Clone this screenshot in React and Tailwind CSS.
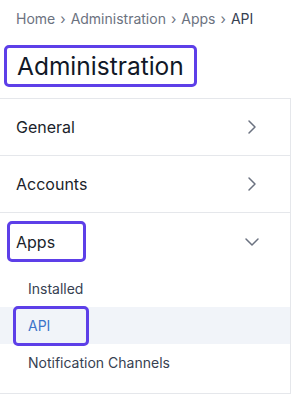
import React from 'react';
import { ChevronRight, ChevronDown } from 'lucide-react';

const crumbs = ['Home', 'Administration', 'Apps'];

const Row = ({ label }) => (
    <div className="h-[57px] border-b border-[#e5e7eb] flex items-center justify-between pl-4 pr-[26px]">
        <span className="text-[16px] text-[#1b1f2b]">{label}</span>
        <ChevronRight size={24} strokeWidth={1.5} className="text-[#6b7280]" />
    </div>
);

export default function App() {
    return (
        <div className="w-[293px] h-[397px] bg-white overflow-hidden flex flex-col" style={{ fontFamily: 'Inter, "Noto Sans", sans-serif' }}>
            {/* Breadcrumb */}
            <div className="h-[29px] pt-[9px] px-4 text-[14px] leading-5 text-[#6b7280] flex items-start gap-[5px]">
                {crumbs.map((c) => (
                    <React.Fragment key={c}>
                        <span>{c}</span>
                        <span>›</span>
                    </React.Fragment>
                ))}
                <span className="text-[#374151]">API</span>
            </div>

            {/* Title */}
            <div className="flex pt-4 pl-1 pb-[11px]">
                <h1 className="h-[42px] flex items-center border-[3px] border-[#5d3fe8] rounded-[5px] px-[10px] text-[24.5px] leading-8 text-[#111827]">
                    Administration
                </h1>
            </div>

            {/* Menu */}
            <div className="w-[291px] border-t border-r border-[#e5e7eb]">
                <Row label="General" />
                <Row label="Accounts" />
                <div className="border-b border-[#e5e7eb] pb-3">
                    <div className="h-[57px] flex items-center justify-between pl-[7px] pr-[26px]">
                        <span className="border-[3px] border-[#5d3fe8] rounded-[5px] pl-[6px] pr-[28px] h-[41px] flex items-center text-[16px] text-[#1b1f2b]">
                            Apps
                        </span>
                        <ChevronDown size={24} strokeWidth={1.5} className="text-[#6b7280]" />
                    </div>
                    <div className="h-[37px] flex items-center pl-7 text-[14px] text-[#374151]">Installed</div>
                    <div className="h-[37px] flex items-center bg-[#f1f4f9] pl-[13px]">
                        <span className="border-[3px] border-[#5d3fe8] rounded-[5px] pl-3 pr-[36px] h-[40px] flex items-center text-[14px] text-[#3b74c9]">
                            API
                        </span>
                    </div>
                    <div className="h-[37px] flex items-center pl-7 text-[14px] text-[#374151]">Notification Channels</div>
                </div>
            </div>
        </div>
    );
}
